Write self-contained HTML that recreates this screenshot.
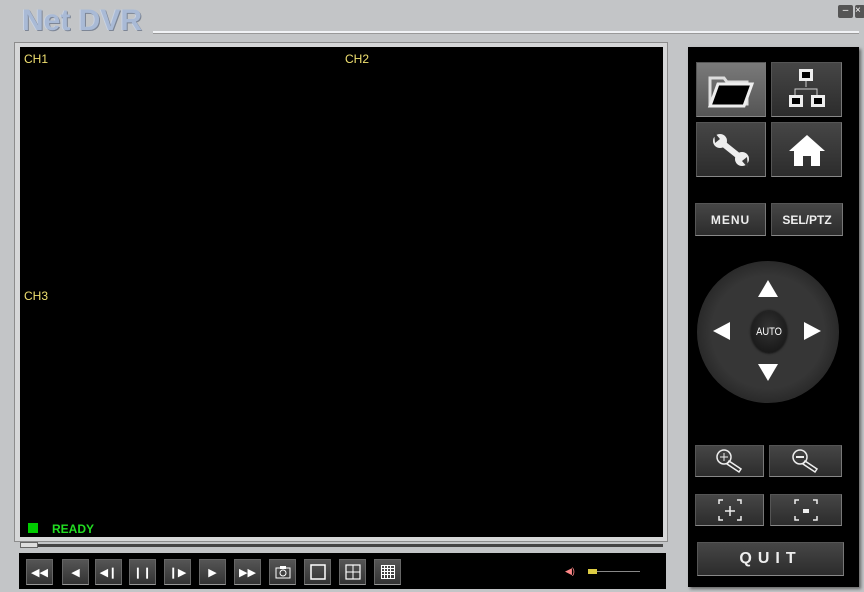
<!DOCTYPE html>
<html><head><style>
*{margin:0;padding:0;box-sizing:border-box}
body{width:864px;height:592px;background:#c3c5c7;position:relative;overflow:hidden;font-family:"Liberation Sans",sans-serif}
.a{position:absolute}
.btn{position:absolute;background:linear-gradient(#464646,#2c2c2c);border:1px solid #555;border-right-color:#777;border-bottom-color:#888;color:#eee;display:flex;align-items:center;justify-content:center;font-weight:bold}
.tb{position:absolute;top:559px;width:27px;height:26px;background:linear-gradient(#555,#333);border:1px solid #666;border-bottom-color:#999;display:flex;align-items:center;justify-content:center}
</style></head><body>
<div class="a" style="left:22px;top:4px;font-size:30px;font-weight:bold;color:#a9bad6;text-shadow:1px 1px 0 #7d8696,-1px 0 0 #c8d2e2;letter-spacing:0px">Net&nbsp;DVR</div>
<div class="a" style="left:153px;top:31px;width:706px;height:3px;background:#f0f2f5;border-bottom:1px solid #999"></div>
<div class="a" style="left:838px;top:5px;width:15px;height:13px;background:#555;border-radius:2px;color:#fff;font-size:10px;text-align:center;line-height:12px">–</div>
<div class="a" style="left:855px;top:5px;width:10px;height:13px;background:#555;border-radius:2px;color:#fff;font-size:10px;line-height:12px">×</div>
<div class="a" style="left:14px;top:42px;width:654px;height:500px;border:1px solid #8c8c8c;background:#d6d7d8"></div>
<div class="a" style="left:20px;top:47px;width:643px;height:490px;background:#000"></div>
<div class="a" style="left:24px;top:52px;color:#f0e070;font-size:12px">CH1</div>
<div class="a" style="left:345px;top:52px;color:#f0e070;font-size:12px">CH2</div>
<div class="a" style="left:24px;top:289px;color:#f0e070;font-size:12px">CH3</div>
<div class="a" style="left:28px;top:523px;width:10px;height:10px;background:#0c0"></div>
<div class="a" style="left:52px;top:522px;color:#2d2;font-size:12px;font-weight:bold">READY</div>
<div class="a" style="left:20px;top:544px;width:643px;height:3px;background:#444"></div>
<div class="a" style="left:20px;top:542px;width:18px;height:6px;background:#ddd;border:1px solid #666"></div>
<div class="a" style="left:19px;top:553px;width:647px;height:36px;background:#000"></div>
<div class="tb" style="left:26px;color:#fff;font-size:11px">◀◀</div>
<div class="tb" style="left:62px;color:#fff;font-size:11px">◀</div>
<div class="tb" style="left:95px;color:#fff;font-size:11px">◀❙</div>
<div class="tb" style="left:129px;color:#fff;font-size:11px">❙❙</div>
<div class="tb" style="left:164px;color:#fff;font-size:11px">❙▶</div>
<div class="tb" style="left:199px;color:#fff;font-size:11px">▶</div>
<div class="tb" style="left:234px;color:#fff;font-size:11px">▶▶</div>
<div class="tb" style="left:269px"><svg width="16" height="14"><rect x="1" y="3" width="14" height="10" fill="none" stroke="#fff"/><rect x="5" y="1" width="6" height="3" fill="#fff"/><circle cx="8" cy="8" r="3" fill="none" stroke="#fff"/></svg></div>
<div class="tb" style="left:304px"><svg width="16" height="16"><rect x="1" y="1" width="14" height="14" fill="none" stroke="#fff" stroke-width="1.5"/></svg></div>
<div class="tb" style="left:339px"><svg width="16" height="16"><rect x="1" y="1" width="14" height="14" fill="none" stroke="#fff" stroke-width="1.2"/><path d="M8 1V15M1 8H15" stroke="#fff"/></svg></div>
<div class="tb" style="left:374px"><svg width="14" height="14"><path d="M.5 .5h13v13h-13zM3.5 0v14M6.5 0v14M9.5 0v14M0 3.5h14M0 6.5h14M0 9.5h14" stroke="#fff" fill="none"/></svg></div>
<div class="a" style="left:565px;top:566px;color:#f88;font-size:9px">◀)</div>
<div class="a" style="left:592px;top:571px;width:48px;height:1px;background:#888"></div>
<div class="a" style="left:588px;top:569px;width:9px;height:5px;background:#dc4"></div>
<div class="a" style="left:688px;top:47px;width:171px;height:540px;background:#000;box-shadow:2px 2px 3px #666"></div>
<div class="btn" style="left:696px;top:62px;width:70px;height:55px;background:linear-gradient(#7a7a7a,#555)"><svg width="50" height="40"><path d="M4 8h14l3 4h20v22H4z" fill="none" stroke="#ddd" stroke-width="3"/><path d="M12 14h34l-8 22H4z" fill="#000" stroke="#eee" stroke-width="3"/></svg></div>
<div class="btn" style="left:771px;top:62px;width:71px;height:55px"><svg width="44" height="46"><rect x="14" y="2" width="14" height="12" fill="#eee"/><rect x="17" y="5" width="8" height="6" fill="#000"/><path d="M21 14v6M10 28v-6h22v6" stroke="#ccc" fill="none"/><rect x="4" y="28" width="14" height="12" fill="#eee"/><rect x="7" y="31" width="8" height="6" fill="#000"/><rect x="26" y="28" width="14" height="12" fill="#eee"/><rect x="29" y="31" width="8" height="6" fill="#000"/></svg></div>
<div class="btn" style="left:696px;top:122px;width:70px;height:55px"><svg width="44" height="40"><path d="M12 12L32 28" stroke="#eee" stroke-width="6" stroke-linecap="round"/><circle cx="11" cy="11" r="7" fill="#eee"/><circle cx="33" cy="29" r="7" fill="#eee"/><path d="M5 2L11 9L6 13Z" fill="#3a3a3a"/><path d="M39 38L33 31L38 27Z" fill="#3a3a3a"/></svg></div>
<div class="btn" style="left:771px;top:122px;width:71px;height:55px"><svg width="40" height="36"><path d="M20 3L38 19H33V34H24V24H16V34H7V19H2Z" fill="#fff"/></svg></div>
<div class="btn" style="left:695px;top:203px;width:71px;height:33px;font-size:12px;letter-spacing:1px">MENU</div>
<div class="btn" style="left:771px;top:203px;width:72px;height:33px;font-size:12px">SEL/PTZ</div>
<div class="a" style="left:697px;top:261px;width:142px;height:142px;border-radius:50%;background:radial-gradient(circle,#363636 56%,#2a2a2a 70%,#3e3e3e 74%,#1c1c1c 82%)"></div>
<div class="a" style="left:748px;top:311px;width:42px;height:42px;border-radius:50%;background:radial-gradient(circle at 50% 40%,#333,#111);box-shadow:0 0 3px #000;color:#fff;font-size:11px;display:flex;align-items:center;justify-content:center;transform:scaleX(.85)">AUTO</div>
<div class="a" style="left:758px;top:280px;width:0;height:0;border-left:10px solid transparent;border-right:10px solid transparent;border-bottom:17px solid #fff"></div>
<div class="a" style="left:758px;top:364px;width:0;height:0;border-left:10px solid transparent;border-right:10px solid transparent;border-top:17px solid #fff"></div>
<div class="a" style="left:713px;top:322px;width:0;height:0;border-top:9px solid transparent;border-bottom:9px solid transparent;border-right:17px solid #fff"></div>
<div class="a" style="left:804px;top:322px;width:0;height:0;border-top:9px solid transparent;border-bottom:9px solid transparent;border-left:17px solid #fff"></div>
<div class="btn" style="left:695px;top:445px;width:69px;height:32px"><svg width="32" height="26"><circle cx="10" cy="9" r="7" fill="none" stroke="#eee" stroke-width="1.5"/><path d="M6 9h8M10 5v8" stroke="#eee"/><path d="M15 13l12 8-2 3-12-8z" fill="none" stroke="#eee" stroke-width="1.5"/></svg></div>
<div class="btn" style="left:769px;top:445px;width:73px;height:32px"><svg width="32" height="26"><circle cx="10" cy="9" r="7" fill="none" stroke="#eee" stroke-width="1.5"/><path d="M6 9h8" stroke="#eee" stroke-width="2"/><path d="M15 13l12 8-2 3-12-8z" fill="none" stroke="#eee" stroke-width="1.5"/></svg></div>
<div class="btn" style="left:695px;top:494px;width:69px;height:32px"><svg width="24" height="22"><path d="M1 5V1h4M19 1h4v4M23 17v4h-4M5 21H1v-4" stroke="#eee" fill="none" stroke-width="1.5"/><path d="M7 12h10M12 7v10" stroke="#eee" stroke-width="1.5"/></svg></div>
<div class="btn" style="left:770px;top:494px;width:72px;height:32px"><svg width="24" height="22"><path d="M1 5V1h4M19 1h4v4M23 17v4h-4M5 21H1v-4" stroke="#eee" fill="none" stroke-width="1.5"/><rect x="9" y="10" width="6" height="4" fill="#eee"/></svg></div>
<div class="btn" style="left:697px;top:542px;width:147px;height:34px;font-size:16px;letter-spacing:6px">QUIT</div>
</body></html>
